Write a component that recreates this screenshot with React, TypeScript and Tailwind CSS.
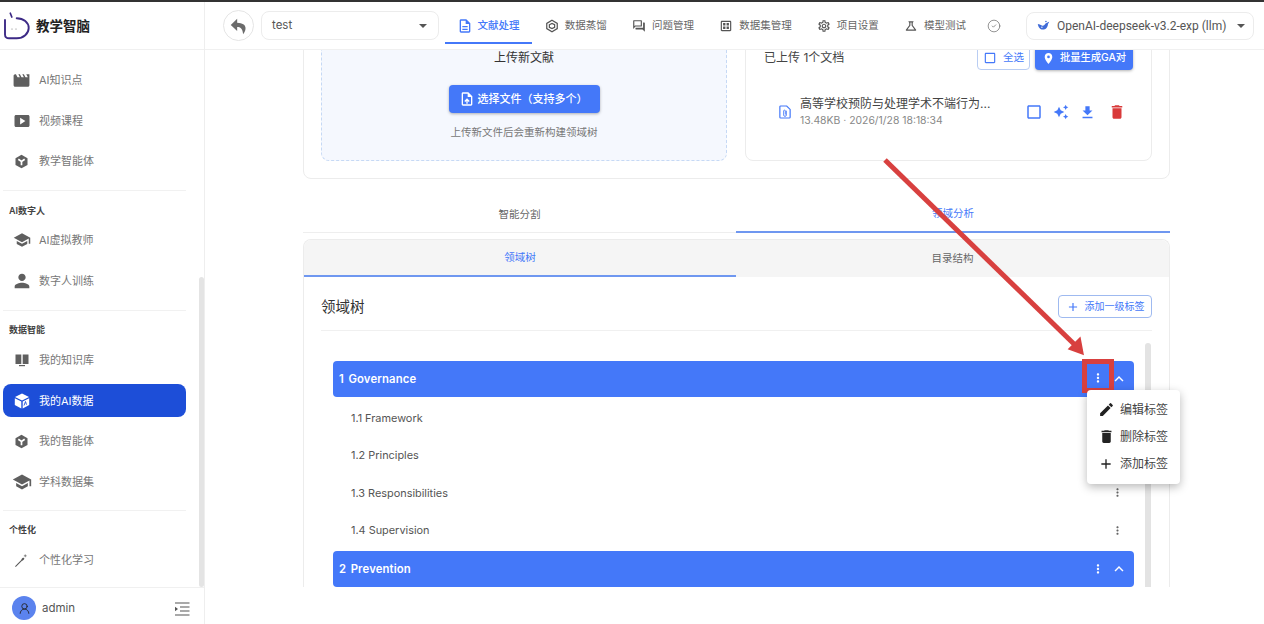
import type { ReactNode } from "react";
import { CircleCheck, UserRound } from "lucide-react";
import {
  MdAdd, MdAutoAwesome, MdCheckBoxOutlineBlank, MdDelete, MdEdit, MdExpandLess, MdFileDownload,
  MdLocationOn, MdMoreVert, MdMovie, MdOutlineDataset, MdOutlineDescription,
  MdOutlineQuestionAnswer, MdOutlineScience, MdOutlineSettings,
  MdOutlineUploadFile, MdPerson, MdSchool, MdSmartDisplay,
} from "react-icons/md";

const font = "font-['Inter','Noto_Sans_CJK_SC',sans-serif]";

function HexIcon({ className = "" }: { className?: string }) {
  return (
    <svg viewBox="0 0 16 16" className={className}>
      <path d="M8 .8 14.400 4.400v7.200L8 15.200 1.600 11.600V4.400z" fill="#5f5f5f" />
      <path d="M4.600 5.600 8 8l3.400-2.400M8 8v4" stroke="#fff" strokeWidth="1.800" fill="none" />
    </svg>
  );
}

function BoxOutline({ className = "" }: { className?: string }) {
  return (
    <svg viewBox="0 0 16 16" className={className} fill="none" stroke="#555" strokeWidth="1.400">
      <path d="M8 1.500 14 5v6l-6 3.500L2 11V5z" />
      <path d="M5 6.500 8 5l3 1.500v3L8 11 5 9.500z" />
    </svg>
  );
}

function CubeIcon({ className = "" }: { className?: string }) {
  return (
    <svg viewBox="0 0 16 16" className={className}>
      <path d="M8 .5 15 4 8 7.500 1 4z" fill="#fff" />
      <path d="M.8 5.200 7.300 8.600v6.900L.8 12z" fill="#fff" />
      <path d="M15.200 5.200 8.700 8.600v6.900l6.500-3.500z" fill="#fff" />
      <path d="M10 12.500l1.500-4 1 3.200" stroke="#1d4ed8" strokeWidth=".9" fill="none" />
    </svg>
  );
}

function BookIcon({ className = "" }: { className?: string }) {
  return (
    <svg viewBox="0 0 16 16" className={className} fill="#5f5f5f">
      <path d="M1.500 2.500h5.800v9.500H1.500zM8.700 2.500h5.800v9.500H8.700z" />
      <path d="M5 13h6v1.200H5z" />
    </svg>
  );
}

function WandIcon({ className = "" }: { className?: string }) {
  return (
    <svg viewBox="0 0 16 16" className={className} fill="none" stroke="#555">
      <path d="M1.500 14.500 10 6" strokeWidth="1.100" />
      <path d="M8.500 7.500 10.500 5.500" strokeWidth="2" />
      <path d="M12 1.500v3M10.500 3h3" strokeWidth=".7" />
    </svg>
  );
}

function ClipDoc({ className = "" }: { className?: string }) {
  return (
    <svg viewBox="0 0 14 16" className={className} fill="none" stroke="#4478f9">
      <path d="M1 2a1 1 0 0 1 1-1h7l4 4v9a1 1 0 0 1-1 1H2a1 1 0 0 1-1-1z" strokeWidth="1.400" />
      <path d="M8.600 6.500v5a1.600 1.600 0 0 1-3.200 0V6.800a1 1 0 0 1 2 0v4.200" strokeWidth="1" />
    </svg>
  );
}

function Whale({ className = "" }: { className?: string }) {
  return (
    <svg viewBox="0 0 16 16" className={className}>
      <path d="M1 6c2 0 3 1 5 2 2 .8 3.500-.6 4.500-2.500C12 5 14 4 15 3.500c-.4 1.500-1 2-1.500 2.500 0 3.500-2.500 7-6.500 7C4 13 1.500 10 1 6z" fill="#3f6bd8" />
      <circle cx="11" cy="3" r="1" fill="#3f6bd8" />
      <circle cx="6" cy="10" r=".9" fill="#fff" />
    </svg>
  );
}

function BackArrow() {
  return (
    <svg viewBox="0 0 24 24" className="w-[22px] h-[22px]" fill="#6b6b6b">
      <path d="M10 4 3 11l7 6.500V13c3.500 0 6 2 6.500 8 3.500-4 5.500-12-6.500-12.500z" />
    </svg>
  );
}

function CollapseIcon() {
  return (
    <svg viewBox="0 0 16 14" className="w-4 h-[14px] ml-auto mt-[6px]" fill="#555">
      <path d="M1 .5h14.500v1.100H1zM6 4.500h9.500v1.100H6zM6 8.400h9.500v1.100H6zM1 12.400h14.500v1.100H1z" />
      <path d="M1 4.700 4 7 1 9.300z" />
    </svg>
  );
}

function Logo() {
  return (
    <svg viewBox="0 0 30 30" className="w-[30px] h-[30px] shrink-0" fill="none">
      <path d="M7.300 2.200 8.800 6" stroke="#3d2a86" strokeWidth="1.700" strokeLinecap="round" />
      <path d="M13.700 7.300C20.500 7.300 25.700 11.500 25.700 17S20.500 27.300 13.700 27.300H6C3.500 27.300 2 26 2 23.500V9" stroke="#3d2a86" strokeWidth="1.900" strokeLinecap="round" />
      <circle cx="9" cy="18" r=".6" fill="#777" />
      <circle cx="13" cy="18" r=".6" fill="#777" />
    </svg>
  );
}

function NavItem({ icon, label, active = false }: { icon: ReactNode; label: string; active?: boolean }) {
  return (
    <div className="h-[40.700px] flex items-center">
      <div className={`ml-[3px] w-[183px] h-[33px] pl-[10px] flex items-center gap-[9px] rounded-lg text-[11px] ${active ? "bg-[#1d4ed8] text-white" : "text-[#777]"}`}>
        <span className="w-[17px] h-4 flex items-center justify-center shrink-0 [&>svg]:shrink-0">{icon}</span>
        {label}
      </div>
    </div>
  );
}

function SectionLabel({ children }: { children: ReactNode }) {
  return <div className="pt-[12.500px] pl-[9px] h-[29px] leading-[14px] text-[9px] font-semibold text-[#444]">{children}</div>;
}

function Divider({ mt }: { mt: string }) {
  return <div className={`${mt} ml-[3px] w-[183px] h-px bg-[#f1f1f1]`} />;
}

function Sidebar() {
  return (
    <aside className="relative w-[205px] shrink-0 border-r border-[#eeeeee] flex flex-col h-[622px]">
      <div className="h-[48px] shrink-0 border-b border-[#f0f0f0] flex items-center pl-[3px] gap-[3px]">
        <Logo />
        <span className="text-[13.500px] font-bold text-[#222] pt-px">教学智脑</span>
      </div>
      <nav className="flex-1 overflow-hidden pt-[10px]">
        <NavItem icon={<MdMovie size={19} color="#5f5f5f" />} label="AI知识点" />
        <NavItem icon={<MdSmartDisplay size={18} color="#5f5f5f" />} label="视频课程" />
        <NavItem icon={<HexIcon className="w-[15px] h-[15px]" />} label="教学智能体" />
        <Divider mt="mt-[8px]" />
        <SectionLabel>AI数字人</SectionLabel>
        <NavItem icon={<MdSchool size={18} color="#5f5f5f" />} label="AI虚拟教师" />
        <NavItem icon={<MdPerson size={22} color="#5f5f5f" />} label="数字人训练" />
        <Divider mt="mt-[8.500px]" />
        <SectionLabel>数据智能</SectionLabel>
        <NavItem icon={<BookIcon className="w-4 h-4" />} label="我的知识库" />
        <NavItem icon={<CubeIcon className="w-4 h-4" />} label="我的AI数据" active />
        <NavItem icon={<HexIcon className="w-[15px] h-[15px]" />} label="我的智能体" />
        <NavItem icon={<MdSchool size={20} color="#5f5f5f" />} label="学科数据集" />
        <Divider mt="mt-[7px]" />
        <SectionLabel>个性化</SectionLabel>
        <NavItem icon={<WandIcon className="w-[15px] h-[15px]" />} label="个性化学习" />
      </nav>
      <div className="absolute right-0 top-[275px] w-[5px] h-[310px] rounded-full bg-[#e4e4e4]" />
      <div className="h-[37px] shrink-0 border-t border-[#f0f0f0] pt-[8px] pl-[12px] pr-[14px] flex items-start">
        <span className="w-6 h-6 rounded-full bg-[#5b83ee] flex items-center justify-center">
          <UserRound size={13} strokeWidth={1.600} color="#222" />
        </span>
        <span className="ml-[6px] leading-6 text-[11.500px] text-[#555]">admin</span>
        <CollapseIcon />
      </div>
    </aside>
  );
}

const tabs = [
  { icon: <MdOutlineDescription size={16} />, label: "文献处理", active: true },
  { icon: <BoxOutline className="w-[14px] h-[14px]" />, label: "数据蒸馏" },
  { icon: <MdOutlineQuestionAnswer size={14} />, label: "问题管理" },
  { icon: <MdOutlineDataset size={14} />, label: "数据集管理" },
  { icon: <MdOutlineSettings size={14} />, label: "项目设置" },
  { icon: <MdOutlineScience size={14} />, label: "模型测试" },
];

function Header() {
  return (
    <header className="h-[48px] shrink-0 border-b border-[#f0f0f0] flex items-center pl-[18px] pr-[10px] bg-white relative z-10">
      <span className="w-[31px] h-[31px] rounded-full border border-[#e5e5e5] flex items-center justify-center">
        <BackArrow />
      </span>
      <div className="ml-[7px] w-[178px] h-[29px] rounded-lg border border-[#ececec] flex items-center justify-between pl-[10px] pr-[11px] pt-px text-[11.500px] text-[#555]">
        test
        <span className="w-0 h-0 border-x-[4px] border-x-transparent border-t-[4px] border-t-[#555]" />
      </div>
      <div className="ml-[6px] flex h-[36px] items-stretch">
        {tabs.map((t) => (
          <div key={t.label} className={`px-[12.600px] pt-[2px] flex items-center gap-[6px] text-[10.500px] border-b-2 ${t.active ? "border-[#4478f9] text-[#4478f9] font-medium" : "border-transparent text-[#666]"}`}>
            <span className={`w-[14px] flex justify-center [&>svg]:shrink-0 ${t.active ? "text-[#4478f9]" : "text-[#555]"}`}>{t.icon}</span>
            {t.label}
          </div>
        ))}
      </div>
      <CircleCheck size={14} strokeWidth={1.200} color="#666" className="ml-[8px]" />
      <div className="ml-auto w-[228px] h-[28px] rounded-lg border border-[#ececec] flex items-center pl-[10px] pr-[8px] font-['Roboto',sans-serif] text-[12px] text-[#555]">
        <Whale className="w-[13px] h-[13px] mr-[7px]" />
        OpenAI-deepseek-v3.2-exp (llm)
        <span className="ml-auto w-0 h-0 border-x-[4px] border-x-transparent border-t-[4px] border-t-[#555]" />
      </div>
    </header>
  );
}

function UploadPanel() {
  return (
    <div className="rounded-lg border border-dashed border-[#c6d9f5] bg-[#f5f8fe] h-[132px] pt-[19px] flex flex-col items-center">
      <div className="h-[18px] leading-[18px] text-[12px] text-[#333]">上传新文献</div>
      <button className="mt-[18px] h-[28px] w-[151px] rounded bg-[#4478f9] text-white text-[11px] font-medium flex items-center pl-[10px] gap-[3px] shadow-[0_1px_3px_rgba(0,0,0,0.3)]">
        <MdOutlineUploadFile size={16} />
        选择文件（支持多个）
      </button>
      <div className="mt-[12px] leading-4 text-[10.500px] text-[#777]">上传新文件后会重新构建领域树</div>
    </div>
  );
}

function DocsPanel() {
  return (
    <div className="rounded-lg border border-[#ececec] h-[132px] pt-[16px] pl-[18px] pr-[18px]">
      <div className="flex items-center h-[24px]">
        <span className="text-[12px] text-[#444]">已上传 1个文档</span>
        <span className="ml-auto h-[24px] w-[53px] rounded border border-[#b9cdf3] flex items-center justify-center gap-[6px] text-[10.500px] text-[#4478f9]">
          <MdCheckBoxOutlineBlank size={14} />
          全选
        </span>
        <span className="ml-[5px] h-[24px] w-[98px] rounded bg-[#4478f9] flex items-center justify-center gap-[5px] text-[10.300px] font-medium text-white shadow-[0_1px_3px_rgba(0,0,0,0.3)]">
          <MdLocationOn size={13} />
          批量生成GA对
        </span>
      </div>
      <div className="mt-[26px] pl-[15px] pr-[7px] flex items-center">
        <ClipDoc className="w-[12px] h-[14px] shrink-0" />
        <div className="ml-[9px] w-[196px]">
          <div className="h-[16px] leading-[16px] text-[12px] text-[#444] whitespace-nowrap">高等学校预防与处理学术不端行为...</div>
          <div className="h-[15px] leading-[15px] mt-px text-[10.400px] text-[#888] whitespace-nowrap">13.48KB · 2026/1/28 18:18:34</div>
        </div>
        <div className="ml-auto flex items-center">
          <MdCheckBoxOutlineBlank size={18} color="#4478f9" />
          <MdAutoAwesome size={16} color="#4478f9" className="ml-[10px]" />
          <MdFileDownload size={17} color="#4478f9" className="ml-[10px]" />
          <MdDelete size={18} color="#d93a3a" className="ml-[12px]" />
        </div>
      </div>
    </div>
  );
}

function TreeHead({ label }: { label: string }) {
  return (
    <div className="h-9 rounded-sm bg-[#4478f9] flex items-center pl-[6px] text-white text-[11.300px] font-semibold tracking-[0.15px]">
      <span className="pt-px [word-spacing:1.500px]">{label}</span>
      <MdMoreVert size={14} className="ml-auto" />
      <MdExpandLess size={18} className="ml-[5px] mr-[6px]" />
    </div>
  );
}

function TreeRow({ label }: { label: string }) {
  return (
    <div className="h-[37.600px] flex items-center pl-[18px] pr-[10px] text-[10.900px] text-[#555]">
      {label}
      <MdMoreVert size={13} color="#666" className="ml-auto" />
    </div>
  );
}

function TreeCard() {
  return (
    <div className="mt-[6px] rounded-t-lg border border-b-0 border-[#ececec]">
      <div className="h-[37px] flex bg-[#f5f5f5] rounded-t-lg text-[10.500px]">
        <div className="w-[432px] bg-[#f5f5f5] border-b-2 border-[#6f97f0] rounded-tl-lg flex items-center justify-center text-[#4478f9]">领域树</div>
        <div className="flex-1 flex items-center justify-center text-[#666]">目录结构</div>
      </div>
      <div className="pt-[18px] pl-[17px] pr-[17px]">
        <div className="flex items-center justify-between h-[23px]">
          <span className="text-[14.500px] text-[#333]">领域树</span>
          <span className="h-[23px] w-[94px] rounded border border-[#9fbaf0] flex items-center justify-center gap-[5px] text-[10px] text-[#4478f9]">
            <MdAdd size={14} />
            添加一级标签
          </span>
        </div>
        <div className="mt-[12px] h-px bg-[#f0f0f0]" />
        <div className="mt-[12px] pl-[12px] flex gap-[11px]">
          <div className="w-[801px] pt-[18px] pb-[30px]">
            <TreeHead label="1 Governance" />
            <div className="pt-[2px]">
              <TreeRow label="1.1 Framework" />
              <TreeRow label="1.2 Principles" />
              <TreeRow label="1.3 Responsibilities" />
              <TreeRow label="1.4 Supervision" />
            </div>
            <div className="mt-[2px]">
              <TreeHead label="2 Prevention" />
            </div>
          </div>
          <div className="w-[6px] rounded-full bg-[#e3e3e3]" />
        </div>
      </div>
    </div>
  );
}

function MenuItem({ icon, label }: { icon: ReactNode; label: string }) {
  return (
    <div className="h-[27px] flex items-center gap-[7px] pl-[12px] text-[12px] text-[#444]">
      <span className="w-[14px] flex justify-center text-[#222] [&>svg]:shrink-0">{icon}</span>
      {label}
    </div>
  );
}

export default function App() {
  return (
    <div className={`relative w-[1264px] h-[624px] overflow-hidden bg-white ${font}`}>
      <div className="h-[2px] bg-[#333]" />
      <div className="flex h-[622px]">
        <Sidebar />
        <main className="flex-1 min-w-0 flex flex-col">
          <Header />
          <div className="h-[537px] overflow-hidden">
            <div className="-mt-[40px] ml-[98px] w-[867px]">
              <div className="rounded-lg border border-[#ececec] h-[169px] pt-[18px] px-[17px] grid grid-cols-[406px_407px] gap-[18px]">
                <UploadPanel />
                <DocsPanel />
              </div>
              <div className="mt-[17px] flex h-[37px] text-[10.500px]">
                <div className="w-[433px] pt-px border-b border-[#eeeeee] flex items-center justify-center text-[#666]">智能分割</div>
                <div className="flex-1 pt-px border-b-2 border-[#6f97f0] flex items-center justify-center text-[#4478f9]">领域分析</div>
              </div>
              <TreeCard />
            </div>
          </div>
        </main>
      </div>

      {/* annotation drawn on top of the screenshot */}
      <svg className="absolute left-0 top-0 pointer-events-none" width="1264" height="624">
        <path d="M885 160 1074 344" stroke="#d8403f" strokeWidth="5" />
        <path d="M1083 354 1069 349 1080 338z" fill="#d8403f" stroke="#d8403f" strokeWidth="1.500" />
      </svg>
      <div className="absolute left-[1082px] top-[359px] w-[32px] h-[34px] border-[5px] border-[#d8403f] bg-[#4478f9] pt-[4px] flex items-center justify-center text-white">
        <MdMoreVert size={14} />
      </div>
      <div className="absolute left-[1087px] top-[390px] w-[93px] h-[94px] rounded bg-white py-[6px] shadow-[0_3px_10px_rgba(0,0,0,0.28)]">
        <MenuItem icon={<MdEdit size={17} />} label="编辑标签" />
        <MenuItem icon={<MdDelete size={17} />} label="删除标签" />
        <MenuItem icon={<MdAdd size={16} />} label="添加标签" />
      </div>
    </div>
  );
}
